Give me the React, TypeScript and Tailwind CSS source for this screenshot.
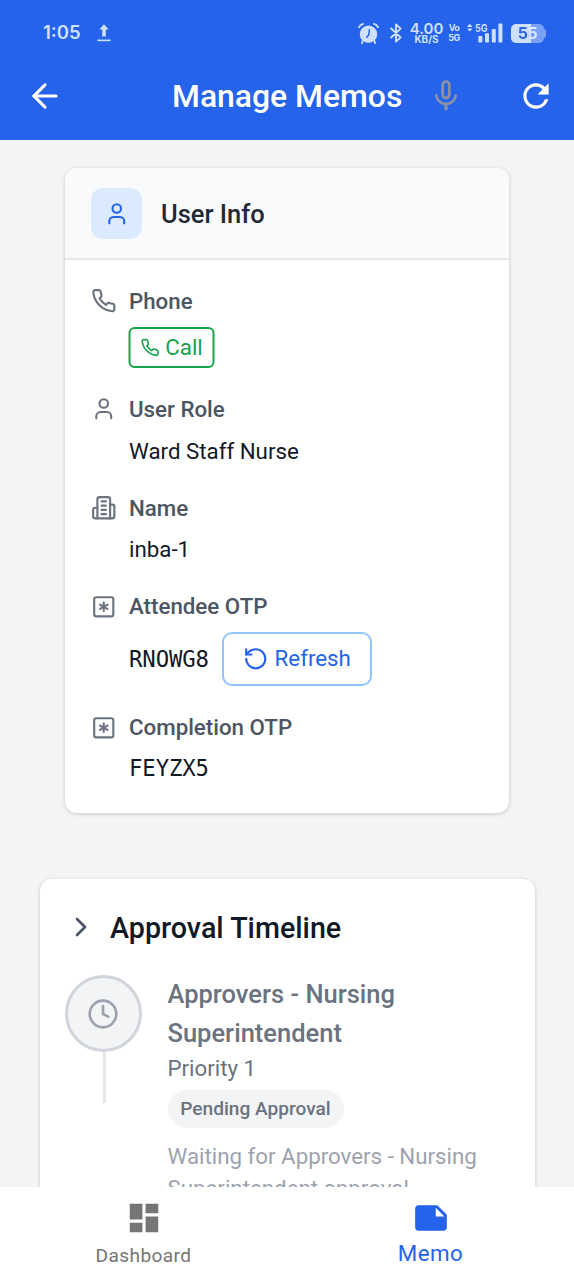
import type { ReactNode } from "react";
import { ArrowLeft, ChevronRight, Clock, RotateCcw, SquareAsterisk, User } from "lucide-react";
import { MdDashboard, MdMicNone, MdNote, MdRefresh } from "react-icons/md";

function PhoneIcon({ className }: { className: string }) {
  return (
    <svg viewBox="0 0 24 24" fill="none" stroke="currentColor" strokeWidth="2" strokeLinecap="round" strokeLinejoin="round" className={className}>
      <path d="M22 16.92v3a2 2 0 0 1-2.18 2 19.79 19.79 0 0 1-8.63-3.07 19.5 19.5 0 0 1-6-6 19.79 19.79 0 0 1-3.07-8.67A2 2 0 0 1 4.11 2h3a2 2 0 0 1 2 1.72 12.84 12.84 0 0 0 .7 2.81 2 2 0 0 1-.45 2.11L8.09 9.91a16 16 0 0 0 6 6l1.27-1.27a2 2 0 0 1 2.11-.45 12.84 12.84 0 0 0 2.81.7A2 2 0 0 1 22 16.92z" />
    </svg>
  );
}

function BuildingIcon({ className }: { className: string }) {
  return (
    <svg viewBox="0 0 24 24" fill="none" stroke="currentColor" strokeWidth="2" strokeLinecap="round" strokeLinejoin="round" className={className}>
      <path d="M6 22V4a2 2 0 0 1 2-2h8a2 2 0 0 1 2 2v18Z" />
      <path d="M6 12H4a2 2 0 0 0-2 2v6a2 2 0 0 0 2 2h2" />
      <path d="M18 9h2a2 2 0 0 1 2 2v9a2 2 0 0 1-2 2h-2" />
      <path d="M10 6h4M10 10h4M10 14h4M10 18h4" />
    </svg>
  );
}

function UploadIcon() {
  return (
    <svg viewBox="0 0 14 18" className="h-[18px] w-[14px]" fill="currentColor">
      <path d="M7 0.3 11.6 5.4H8.8V12.4H5.2V5.4H2.4Z" />
      <rect x="0.5" y="15.6" width="13" height="1.6" />
    </svg>
  );
}

function AlarmIcon() {
  return (
    <svg viewBox="0 0 20 20" className="h-[21px] w-[21px]" fill="none" stroke="currentColor" strokeLinecap="round">
      <circle cx="10" cy="10.6" r="8.3" fill="currentColor" stroke="none" />
      <path d="M0.9 4.1Q2.2 1.6 4.8 0.9M19.1 4.1Q17.8 1.6 15.2 0.9" strokeWidth="1.7" />
      <path d="M4.4 17 3.8 19.2M15.6 17l0.6 2.2" strokeWidth="1.8" />
      <path d="M10.8 6.5 10.3 11.1 8.2 13.8" stroke="#2563eb" strokeWidth="1.4" />
    </svg>
  );
}

function BluetoothIcon() {
  return (
    <svg viewBox="0 0 12 20" className="h-5 w-3" fill="none" stroke="currentColor" strokeWidth="1.9" strokeLinejoin="round" strokeLinecap="round">
      <path d="M1.2 5.5 10.6 14.4 6 18.6V1.4L10.6 5.6 1.2 14.5" />
    </svg>
  );
}

function SignalIcon() {
  return (
    <svg viewBox="0 0 36 20" className="h-5 w-9" fill="currentColor">
      <path d="M0 4 2.8 0.8 5.6 4ZM0 5.6 2.8 8.6 5.6 5.6Z" />
      <text x="8" y="8.6" fontFamily="Inter, sans-serif" fontSize="10.5" fontWeight="700" textLength="12.5" lengthAdjust="spacingAndGlyphs">5G</text>
      <rect x="11.3" y="13" width="4" height="6.5" rx="0.8" />
      <rect x="18" y="10.3" width="4" height="9.2" rx="0.8" />
      <rect x="24.8" y="6" width="4" height="13.5" rx="0.8" />
      <rect x="31.4" y="0.6" width="4" height="18.9" rx="0.8" />
    </svg>
  );
}

function StatusBar() {
  return (
    <div className="flex h-[66px] items-center pr-[28px] pl-[43px] font-[Inter,sans-serif] text-[#cfe0ff]">
      <span className="w-[54px] text-[18.5px] font-semibold">1:05</span>
      <UploadIcon />
      <div className="ml-auto flex items-center">
        <AlarmIcon />
        <div className="ml-[11px]"><BluetoothIcon /></div>
        <div className="ml-[8px] flex w-[33px] flex-col items-center">
          <span className="text-[15px] leading-[12px] font-semibold">4.00</span>
          <span className="text-[10px] leading-[9px] font-bold">KB/S</span>
        </div>
        <div className="ml-[6px] flex w-[10px] flex-col items-center text-[9px] leading-[10px] font-bold tracking-[-0.5px]">
          <span>Vo</span>
          <span>5G</span>
        </div>
        <div className="ml-[8px]"><SignalIcon /></div>
        <div className="ml-[8px] flex items-center">
          <div className="flex h-[19px] w-[33px] items-center justify-center rounded-[5px] bg-[linear-gradient(90deg,#cfe0ff_62%,#7ba1f5_62%)] text-[16px] font-bold tracking-tight">
            <span className="bg-[linear-gradient(90deg,#2f65dd_56%,#dbe8ff_56%)] bg-clip-text text-transparent">55</span>
          </div>
          <div className="h-[9px] w-[2px] rounded-r-full bg-[#7ba1f5]" />
        </div>
      </div>
    </div>
  );
}

function Header() {
  return (
    <header className="h-[140.4px] shrink-0 bg-[#2563eb]">
      <StatusBar />
      <div className="flex h-[60px] items-center pr-[19px] pl-[26px] text-white">
        <ArrowLeft className="h-[38px] w-[38px]" />
        <h1 className="ml-[108px] text-[31.9px] leading-[38px] font-medium whitespace-nowrap">Manage Memos</h1>
        <MdMicNone className="ml-[25px] h-[38px] w-[38px] text-[#8c92a4]" />
        <MdRefresh className="ml-auto h-[38px] w-[38px]" />
      </div>
    </header>
  );
}

function Field({ icon, label, children }: { icon: ReactNode; label: string; children: ReactNode }) {
  return (
    <div className="flex gap-[12.5px]">
      <div className="flex h-8 shrink-0 items-center text-[#6b7280]">{icon}</div>
      <div className="flex flex-col items-start gap-[9.6px]">
        <div className="text-[22.3px] leading-8 font-medium text-[#4b5563]">{label}</div>
        {children}
      </div>
    </div>
  );
}

function UserInfo() {
  const icon = "h-[25.5px] w-[25.5px]";
  const value = "text-[22.3px] leading-8 text-[#111827]";
  const code = "font-['DejaVu_Sans_Mono',monospace] text-[22.3px] leading-[31px] tracking-[-0.1px] text-[#111827]";
  return (
    <section className="mx-[65px] mt-7 h-[644.5px] shrink-0 overflow-hidden rounded-[12px] bg-white shadow-[0_1px_4px_rgba(0,0,0,0.18)]">
      <div className="flex h-[92px] items-center gap-[19px] border-b-2 border-[#e5e7eb] bg-[#f9fafb] px-[26px] pt-px">
        <div className="flex h-[51px] w-[51px] items-center justify-center rounded-[12px] bg-[#dbeafe] text-[#2563eb]">
          <User className="h-[25.5px] w-[25.5px]" />
        </div>
        <h2 className="text-[25.5px] font-medium text-[#1f2937]">User Info</h2>
      </div>
      <div className="flex flex-col gap-[25px] px-[26px] pt-[24.6px]">
        <Field icon={<PhoneIcon className={icon} />} label="Phone">
          <button className="flex h-[41.5px] w-[86px] -translate-x-[0.5px] items-center justify-center gap-[6px] rounded-[6px] border-2 border-[#16a34a] text-[22.3px] text-[#16a34a]">
            <PhoneIcon className="h-[19px] w-[19px]" />
            Call
          </button>
        </Field>
        <Field icon={<User className={icon} />} label="User Role">
          <div className={value}>Ward Staff Nurse</div>
        </Field>
        <Field icon={<BuildingIcon className={icon} />} label="Name">
          <div className={value}>inba-1</div>
        </Field>
        <Field icon={<SquareAsterisk className={icon} />} label="Attendee OTP">
          <div className="flex items-center gap-[13px]">
            <span className={code}>RNOWG8</span>
            <button className="flex h-[54.5px] w-[150px] items-center justify-center gap-[6px] rounded-[10px] border-2 border-[#93c5fd] text-[22.3px] text-[#2563eb]">
              <RotateCcw className="h-[25.5px] w-[25.5px]" />
              Refresh
            </button>
          </div>
        </Field>
        <Field icon={<SquareAsterisk className={icon} />} label="Completion OTP">
          <div className={code}>FEYZX5</div>
        </Field>
      </div>
    </section>
  );
}

function Timeline() {
  return (
    <section className="mx-[39.5px] mt-[66.5px] h-[400px] shrink-0 rounded-[12px] bg-white px-[25.5px] pt-[26px] shadow-[0_1px_4px_rgba(0,0,0,0.18)]">
      <div className="flex h-[44px] items-center">
        <ChevronRight className="h-[32px] w-[32px] text-[#4b5563]" />
        <h2 className="ml-[13px] translate-y-[0.6px] text-[28.7px] font-medium text-[#111827]">Approval Timeline</h2>
      </div>
      <div className="mt-[26px] flex">
        <div className="flex w-[76.5px] shrink-0 flex-col items-center">
          <div className="flex h-[76.5px] w-[76.5px] shrink-0 items-center justify-center rounded-full border-[3px] border-[#d1d5db] bg-[#f3f4f6] text-[#9ca3af]">
            <Clock className="h-[32px] w-[32px]" />
          </div>
          <div className="ml-[3px] h-[51px] w-[3px] bg-[#e5e7eb]" />
        </div>
        <div className="ml-[26px] w-[340px] text-[#6b7280]">
          <div className="text-[25.5px] leading-[38.2px] font-medium">Approvers - Nursing Superintendent</div>
          <div className="text-[22.3px] leading-8">Priority 1</div>
          <div className="mt-[6.5px] flex h-[38px] w-[176px] items-center justify-center rounded-full bg-[#f3f4f6] text-[19.1px] font-medium">Pending Approval</div>
          <div className="mt-[12px] text-[22.3px] leading-8 text-[#9ca3af]">Waiting for Approvers - Nursing Superintendent approval</div>
        </div>
      </div>
    </section>
  );
}

function BottomNav() {
  return (
    <nav className="grid h-[93px] shrink-0 grid-cols-2 bg-white">
      <div className="flex flex-col items-center pt-[12px] text-[#757575]">
        <MdDashboard className="h-[38px] w-[38px]" />
        <span className="mt-[6px] text-[19.1px] leading-[26px] tracking-[0.4px]">Dashboard</span>
      </div>
      <div className="flex flex-col items-center pt-[12px] text-[#2563eb]">
        <MdNote className="h-[38px] w-[38px]" />
        <span className="mt-[3px] text-[22.3px] leading-[26px] tracking-[0.5px]">Memo</span>
      </div>
    </nav>
  );
}

export default function App() {
  return (
    <div className="flex h-[1280px] w-[574px] flex-col overflow-hidden bg-[#f3f4f6] font-[Roboto,sans-serif]">
      <Header />
      <main className="flex min-h-0 flex-1 flex-col overflow-hidden">
        <UserInfo />
        <Timeline />
      </main>
      <BottomNav />
    </div>
  );
}
